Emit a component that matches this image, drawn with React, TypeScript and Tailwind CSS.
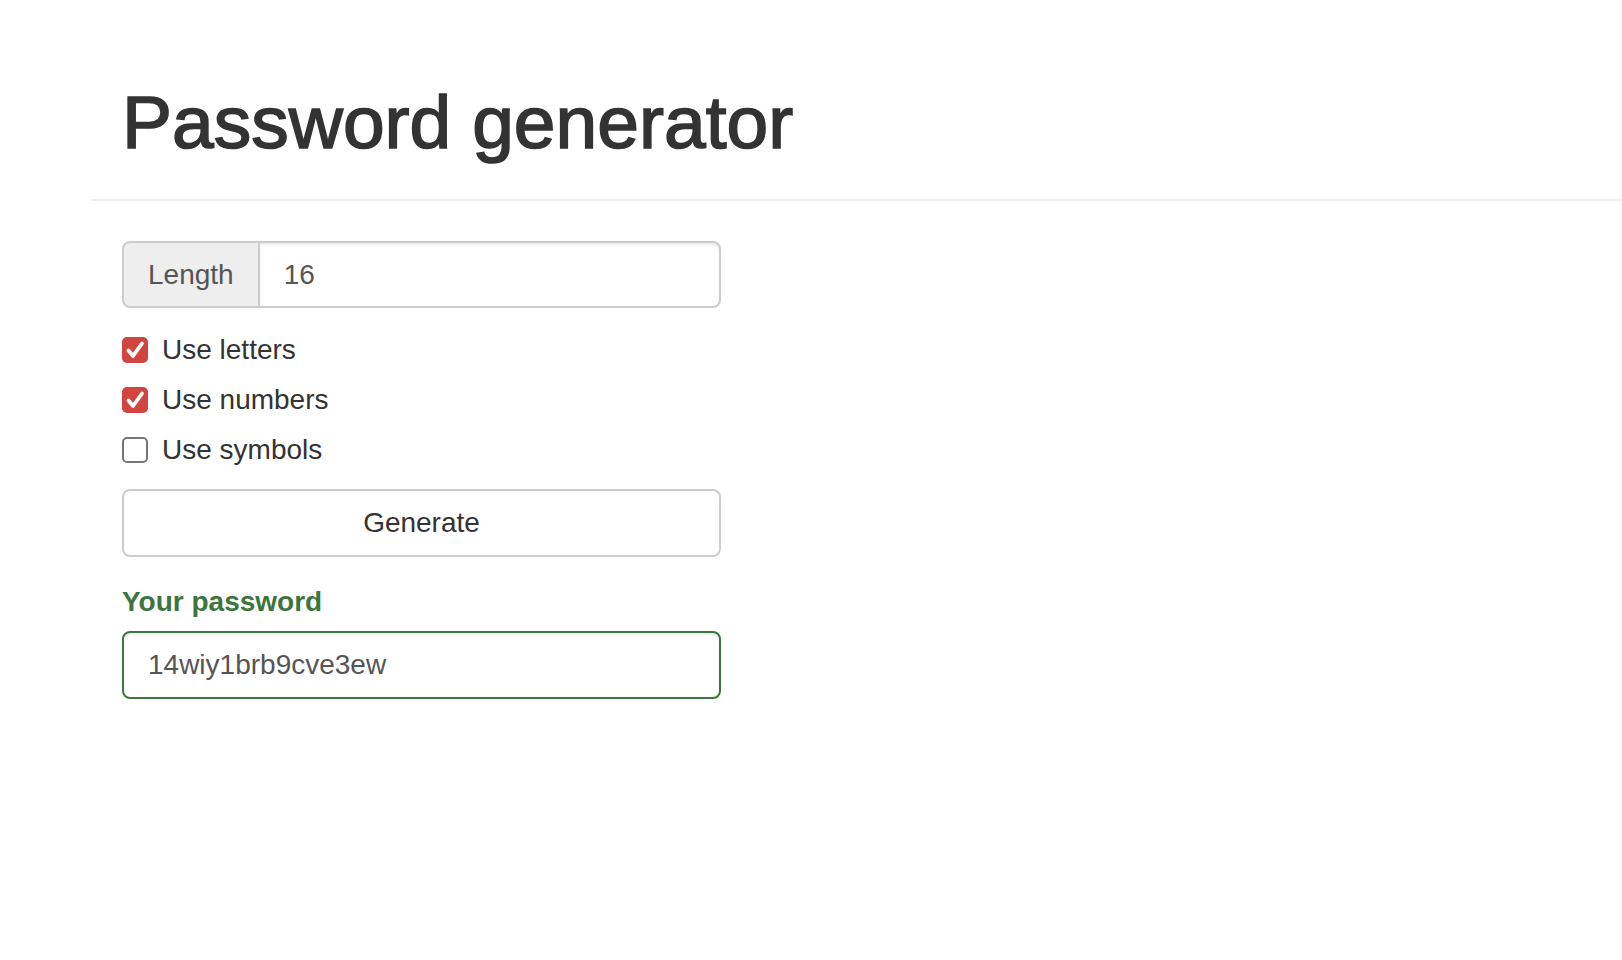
import { useState } from "react"

const options = [
  { id: "letters", label: "Use letters", checked: true },
  { id: "numbers", label: "Use numbers", checked: true },
  { id: "symbols", label: "Use symbols", checked: false },
]

function Check({ checked }: { checked: boolean }) {
  if (!checked) {
    return <span className="block h-[26px] w-[26px] shrink-0 rounded-[5px] border-2 border-[#767676] bg-white" />
  }
  return (
    <span className="flex h-[26px] w-[26px] shrink-0 items-center justify-center rounded-[5px] bg-[#d2443f]">
      <svg width="26" height="26" viewBox="0 0 26 26">
        <polyline points="6.5,13.5 11,19 20,6.5" fill="none" stroke="white" strokeWidth="3.8" strokeLinecap="round" strokeLinejoin="round" />
      </svg>
    </span>
  )
}

export default function App() {
  const [opts, setOpts] = useState(options)
  const [length, setLength] = useState("16")
  const [password] = useState("14wiy1brb9cve3ew")

  const toggle = (id: string) =>
    setOpts((o) => o.map((x) => (x.id === id ? { ...x, checked: !x.checked } : x)))

  return (
    <div className="min-h-screen bg-white pl-[92px] text-[#333333] font-['Liberation_Sans',Arial,sans-serif]">
      {/* Header */}
      <div className="border-b-2 border-[#eeeeee] pt-[81px] pb-[36px] pl-[30px]">
        <h1 className="text-[75px] leading-[82px] font-normal text-[#333333] [-webkit-text-stroke:1.6px_#333333]">Password generator</h1>
      </div>

      {/* Form */}
      <div className="w-[629px] pl-[30px] pt-[40px]">
        <div className="flex h-[67px] w-[599px]">
          <span className="flex items-center rounded-l-[8px] border-2 border-[#cccccc] bg-[#eeeeee] px-[24px] text-[28px] text-[#555555]">
            Length
          </span>
          <input
            value={length}
            onChange={(e) => setLength(e.target.value)}
            className="min-w-0 flex-1 rounded-r-[8px] border-2 border-l-0 border-[#cccccc] px-[24px] text-[28px] text-[#555555] shadow-[inset_0_2px_2px_rgba(0,0,0,0.075)] outline-none"
          />
        </div>

        <div className="mt-[22px] flex flex-col gap-[10px]">
          {opts.map((o) => (
            <label key={o.id} className="flex h-[40px] cursor-pointer items-center gap-[14px] text-[28px] leading-[40px]" onClick={() => toggle(o.id)}>
              <Check checked={o.checked} />
              <span>{o.label}</span>
            </label>
          ))}
        </div>

        <button className="mt-[19px] h-[68px] w-[599px] rounded-[8px] border-2 border-[#cccccc] bg-white text-[28px] text-[#333333]">
          Generate
        </button>

        <div className="mt-[25px] text-[28px] leading-[40px] font-bold text-[#3c763d]">Your password</div>
        <input
          readOnly
          value={password}
          className="mt-[9px] h-[68px] w-[599px] rounded-[8px] border-2 border-[#3c763d] px-[24px] text-[28px] text-[#555555] shadow-[inset_0_2px_2px_rgba(0,0,0,0.075)] outline-none"
        />
      </div>
    </div>
  )
}
